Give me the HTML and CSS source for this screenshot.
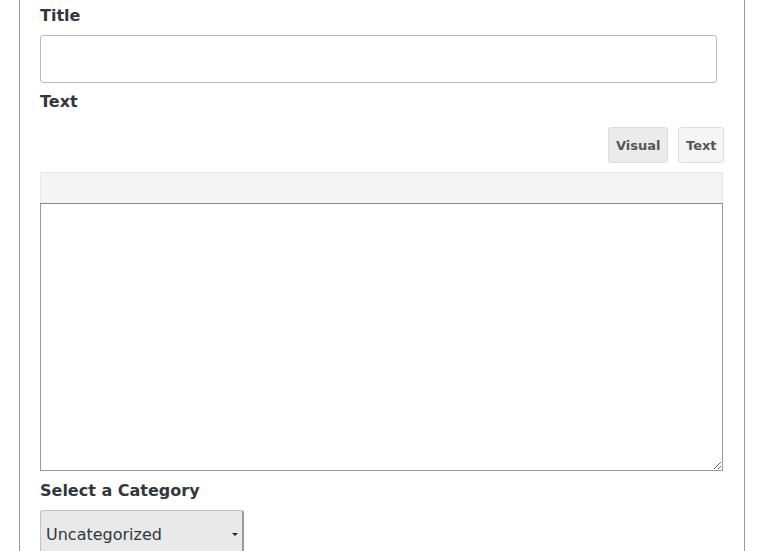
FILE: index.html
```html
<!DOCTYPE html>
<html>
<head>
    <title>New Post</title>
    <link rel="stylesheet" href="styles.css">
</head>
<body>
    <div class="post-form">
        <label class="field-label" for="title">Title</label>
        <input type="text" id="title" class="title-input">

        <label class="field-label" for="content">Text</label>
        <div class="editor-tabs">
            <button class="tab tab-visual">Visual</button>
            <button class="tab tab-text">Text</button>
        </div>
        <div class="editor-toolbar"></div>
        <textarea id="content" class="editor-area"></textarea>

        <label class="field-label category-label" for="category">Select a Category</label>
        <div class="select-box">
            <span>Uncategorized</span>
            <span class="caret"></span>
        </div>
    </div>
</body>
</html>
```

FILE: styles.css
```css
body {
    margin: 0;
    background-color: #fff;
    font-family: "DejaVu Sans", sans-serif;
    color: #32373c;
    overflow: hidden;
}

.post-form {
    margin-left: 19px;
    width: 726px;
    height: 551px;
    border-left: 1px solid #999;
    border-right: 1px solid #999;
    padding: 0 0 0 20px;
    box-sizing: border-box;
}

.field-label {
    display: block;
    font-size: 16px;
    font-weight: bold;
    line-height: 20px;
    padding-top: 6px;
    margin-bottom: 9px;
}

.title-input {
    display: block;
    width: 677px;
    height: 48px;
    box-sizing: border-box;
    border: 1px solid #bbb;
    border-radius: 3px;
    margin: 0 0 3px 0;
}

.editor-tabs {
    display: flex;
    justify-content: flex-end;
    gap: 10px;
    width: 684px;
    margin-top: 15px;
    margin-bottom: 9px;
}

.tab {
    height: 36px;
    border: 1px solid #dcdcdc;
    border-radius: 3px;
    font-family: "DejaVu Sans", sans-serif;
    font-size: 13px;
    font-weight: bold;
    color: #555;
    padding: 0 7px;
}

.tab-visual {
    width: 60px;
    background-color: #ebebeb;
}

.tab-text {
    width: 46px;
    background-color: #f5f5f5;
}

.editor-toolbar {
    width: 683px;
    height: 31px;
    box-sizing: border-box;
    background-color: #f4f4f4;
    border: 1px solid #e8e8e8;
    border-bottom: none;
}

.editor-area {
    display: block;
    width: 683px;
    height: 268px;
    box-sizing: border-box;
    border: 1px solid #999;
    border-top-color: #888;
    margin: 0;
    resize: vertical;
}

.category-label {
    margin-top: 4px;
    margin-bottom: 9px;
}

.select-box {
    display: flex;
    align-items: center;
    justify-content: space-between;
    width: 204px;
    height: 48px;
    box-sizing: border-box;
    background-color: #e9e9e9;
    border: 1px solid #c4c4c4;
    border-right: 2px solid #999;
    border-radius: 3px 3px 0 0;
    padding: 0 4px 0 5px;
    font-size: 16px;
    color: #32373c;
}

.caret {
    width: 0;
    height: 0;
    border-left: 3px solid transparent;
    border-right: 3px solid transparent;
    border-top: 3px solid #222;
}
```
